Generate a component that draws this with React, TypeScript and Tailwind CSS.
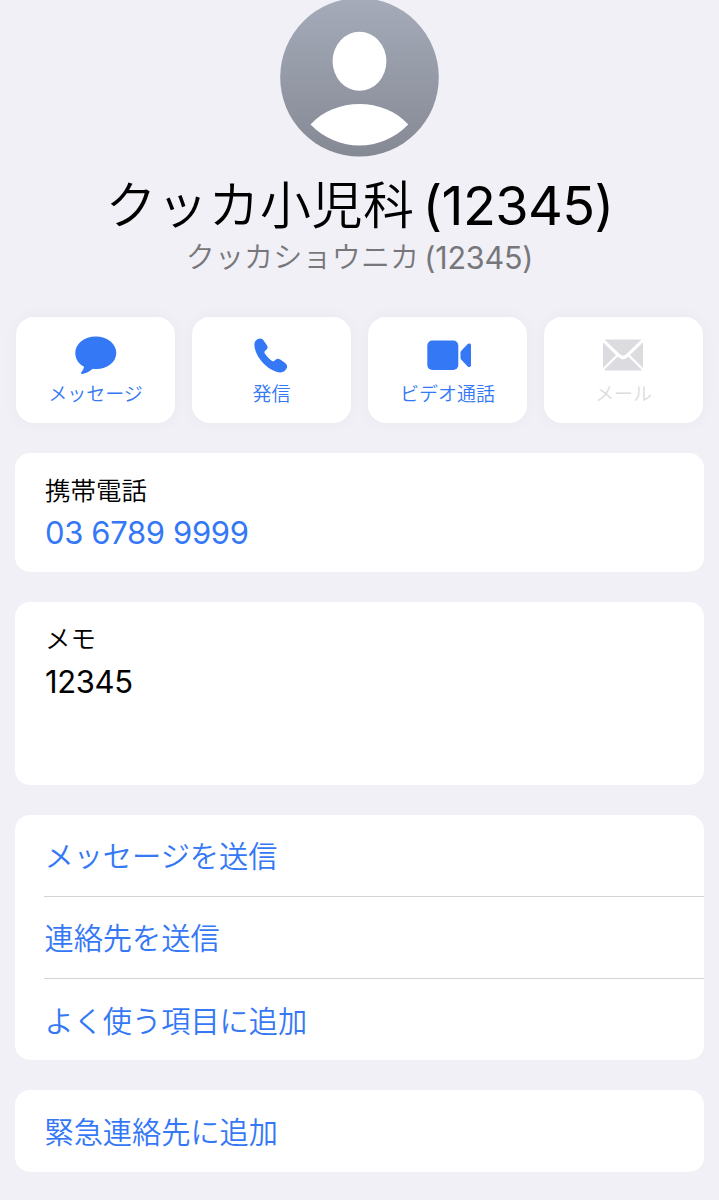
import type { ReactNode } from 'react';

interface QuickAction {
  id: string;
  label: string;
  icon: ReactNode;
  disabled?: boolean;
}

const MessageIcon = () => (
  <svg className="h-[40px] w-[44px]" viewBox="0.5 0 44 40" fill="currentColor">
    <path d="M22.3 1.5C33.800 1.5 42.800 8.700 42.800 17.800C42.800 27.100 34.200 34 22.800 34C21.600 34 20.500 33.900 19.400 33.800C16.300 36.400 12.300 38.600 8.900 39C7.700 39.100 7.200 38.200 7.900 37.200C9.100 35.600 10.200 33.800 10.500 31.700C5.100 29 1.800 24 1.800 17.800C1.800 8.700 10.800 1.500 22.300 1.500Z" />
  </svg>
);

const PhoneIcon = () => (
  <svg className="h-[40px] w-[44px]" viewBox="0.7 0.5 44 40" fill="currentColor">
    <path d="M5.100 9.600C5.200 6.600 7.900 4.100 10.800 4C12.500 4 13.500 4.900 14.500 6.300L17.600 10.800C18.700 12.400 18.600 13.700 17.300 15.100L15.700 16.600C15 17.300 15 17.900 15.400 18.700C16.900 21.400 19.700 24.400 22.800 26.500C23.500 27 24.100 27 24.800 26.400L26.500 25.100C28 23.900 29.300 23.900 30.900 25L35.500 28.200C37.700 29.800 38.300 31.400 37.500 33.500C36.400 36.300 34.100 37.900 31 37.900C25.200 37.900 17.800 33.100 12.400 27C7.800 21.700 5 15.200 5.100 9.600Z" />
  </svg>
);

const VideoIcon = () => (
  <svg className="h-[40px] w-[48px]" viewBox="0 0 48 40" fill="currentColor">
    <rect x="4.300" y="5.500" width="31" height="29.500" rx="5" />
    <path d="M38.100 16L44.700 9.100C46 7.800 48 8.400 48 10.200V30.300C48 32.100 46 32.700 44.700 31.400L38.100 24.500Q37.500 23.900 37.500 23.100V17.400Q37.500 16.600 38.100 16Z" />
  </svg>
);

const MailIcon = () => (
  <svg className="h-[40px] w-[44px]" viewBox="0 0 44 40" fill="currentColor">
    <path d="M4.500 4.500H40Q40.600 4.500 40.100 5.100L25 19.300Q22 22 19 19.300L3.900 5.100Q3.400 4.500 4.500 4.500Z" />
    <path d="M2 7.200L15 19.900L2 33Z" />
    <path d="M42 7.200V33L29 19.900Z" />
    <path d="M16.700 21.500L17.900 22.600Q22 26.200 26.100 22.600L27.300 21.500L40.500 34.600Q40.900 35.500 40 35.500H4Q3.100 35.500 3.500 34.600Z" />
  </svg>
);

const quickActions: QuickAction[] = [
  { id: 'message', label: 'メッセージ', icon: <MessageIcon /> },
  { id: 'call', label: '発信', icon: <PhoneIcon /> },
  { id: 'video', label: 'ビデオ通話', icon: <VideoIcon /> },
  { id: 'mail', label: 'メール', icon: <MailIcon />, disabled: true },
];

const contactActions = ['メッセージを送信', '連絡先を送信', 'よく使う項目に追加'];

function Avatar() {
  return (
    <svg className="-mt-[2px] h-[159px] w-[159px] shrink-0" viewBox="0 0 159 159">
      <defs>
        <linearGradient id="avatar-bg" x1="0" y1="0" x2="0" y2="1">
          <stop offset="0" stopColor="#a5abb9" />
          <stop offset="1" stopColor="#858994" />
        </linearGradient>
      </defs>
      <circle cx="79.500" cy="79.300" r="79.300" fill="url(#avatar-bg)" />
      <ellipse cx="79.500" cy="63.300" rx="26.900" ry="29.500" fill="#fff" />
      <path d="M30.500 126.500C55 99 104 99 128.200 126.500C101 154.500 58 154.500 30.500 126.500Z" fill="#fff" />
    </svg>
  );
}

function QuickActionButton({ action }: { action: QuickAction }) {
  return (
    <button
      type="button"
      disabled={action.disabled}
      className={`flex h-[105.500px] flex-col items-center rounded-[18px] bg-white pt-[18px] shadow-[0_0_18px_rgba(0,0,40,0.035)] ${
        action.disabled ? 'text-[#dcdce0]' : 'text-[#3478f6]'
      }`}
    >
      {action.icon}
      <span className="mt-[5.500px] text-[19px] leading-[28px] font-[350] whitespace-nowrap">{action.label}</span>
    </button>
  );
}

export default function App() {
  return (
    <div className="flex h-[1200px] w-[719px] flex-col overflow-hidden bg-[#f1f0f6] font-['Inter','Noto_Sans_CJK_JP',sans-serif] text-black">
      {/* Contact header */}
      <header className="flex h-[317px] flex-col items-center">
        <Avatar />
        <h1 className="mt-[12px] flex h-[70px] items-center text-[54px] leading-[70px] whitespace-nowrap">
          <span className="pt-[3px] text-[51px] font-[350] tracking-[0.500px]">クッカ小児科</span>
          <span className="ml-[8px] pt-[3px] tracking-[-0.600px]">(12345)</span>
        </h1>
        <p className="flex h-[38px] items-center text-[30.500px] leading-[38px] whitespace-nowrap text-[#77777b]">
          <span className="text-[29px] font-[350] tracking-[0.200px]">クッカショウニカ</span>
          <span className="ml-[5px] tracking-[-0.200px]">(12345)</span>
        </p>
      </header>

      <main className="flex flex-col px-[15px]">
        <div className="grid grid-cols-4 gap-[16.400px] px-[0.800px]">
          {quickActions.map((action) => (
            <QuickActionButton key={action.id} action={action} />
          ))}
        </div>

        {/* Phone number */}
        <section className="mt-[30.500px] h-[119px] rounded-[15px] bg-white px-[30px] pt-[20px]">
          <h2 className="text-[25.500px] leading-[36px] font-[350]">携帯電話</h2>
          <a className="mt-[4px] block text-[31px] leading-[40px] tracking-[-0.350px] text-[#3478f6]">03 6789 9999</a>
        </section>

        {/* Notes */}
        <section className="mt-[30px] h-[183px] rounded-[15px] bg-white px-[30px] pt-[19px]">
          <h2 className="text-[25.500px] leading-[36px] font-[350]">メモ</h2>
          <p className="mt-[5px] text-[31px] leading-[40px] tracking-[-0.350px]">12345</p>
        </section>

        <ul className="mt-[30px] h-[245px] overflow-hidden rounded-[15px] bg-white pl-[29.500px] text-[29.200px] font-[350] text-[#3478f6]">
          {contactActions.map((label) => (
            <li key={label} className="-ml-[0.500px] flex h-[82px] items-center border-b border-[#d3d3d6] pt-[3px] pl-[0.500px] last:border-b-0">
              {label}
            </li>
          ))}
        </ul>

        <button
          type="button"
          className="mt-[30px] flex h-[82px] items-center rounded-[15px] bg-white pt-[3px] pl-[29.500px] text-[29.200px] font-[350] text-[#3478f6]"
        >
          緊急連絡先に追加
        </button>
      </main>
    </div>
  );
}
